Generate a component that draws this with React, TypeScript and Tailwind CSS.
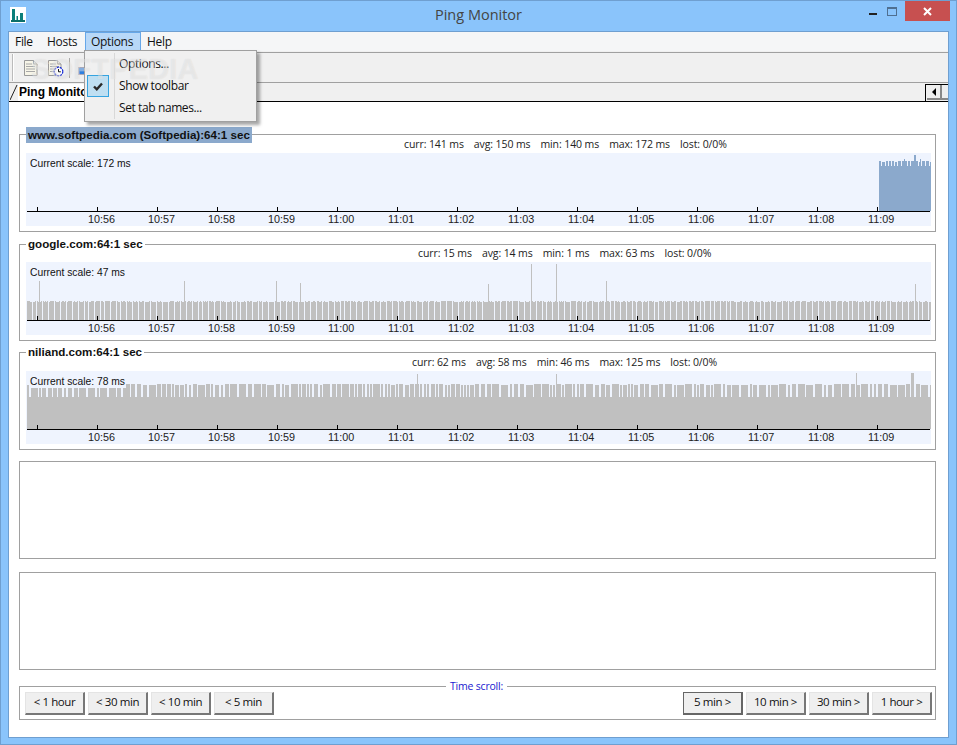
import React from 'react';

const sans = 'font-["Open_Sans","Noto_Sans",sans-serif]';
const arial = 'font-["Liberation_Sans",Arial,sans-serif]';

const times = ['10:56', '10:57', '10:58', '10:59', '11:00', '11:01', '11:02', '11:03', '11:04', '11:05', '11:06', '11:07', '11:08', '11:09'];

// small repeatable pseudo random so the bars stay put
const rnd = (seed: number) => {
  const x = Math.sin(seed * 12.9898) * 43758.5453;
  return x - Math.floor(x);
};

type Spike = { x: number; top: number; w?: number };

const BG = '#eff4fe';
const GRAY = '#c0c0c0';
const BLUE = '#8ba9cc';

const Chart: React.FC<{ kind: 'blue' | 'busy' | 'full'; scale: string; spikes?: Spike[] }> = ({ kind, scale, spikes = [] }) => {
  const axis = 58;
  const bars: React.ReactNode[] = [];

  if (kind === 'blue') {
    bars.push(<rect key="body" x={853} y={13} width={52} height={axis - 13} fill={BLUE} />);
    let x = 853;
    let n = 0;
    while (x < 905) {
      const w = rnd(n) > 0.6 ? 3 : 2;
      bars.push(<rect key={x} x={x} y={rnd(n + 40) > 0.75 ? 9 : 8} width={w} height={6} fill={BLUE} />);
      x += w + 1;
      n += 1;
    }
    bars.push(<rect key="s1" x={888} y={2} width={2} height={11} fill={BLUE} />);
    bars.push(<rect key="s2" x={878} y={6} width={1} height={7} fill={BLUE} />);
    bars.push(<rect key="s3" x={894} y={6} width={1} height={7} fill={BLUE} />);
  }

  if (kind === 'busy') {
    let x = 1;
    let n = 0;
    while (x < 905) {
      const w = rnd(n) > 0.85 ? 3 : 5;
      bars.push(<rect key={x} x={x} y={39} width={w} height={axis - 39} fill={GRAY} />);
      // one pixel notches along the top edge
      for (let c = 0; c < w; c += 1) {
        if (rnd(x + c + 200) > 0.55) bars.push(<rect key={`n${x + c}`} x={x + c} y={39} width={1} height={1} fill={BG} />);
      }
      x += w + 1;
      n += 1;
    }
  }

  if (kind === 'full') {
    bars.push(<rect key="body" x={1} y={26} width={904} height={axis - 26} fill={GRAY} />);
    let x = 1;
    let n = 0;
    while (x < 905) {
      const w = rnd(n) > 0.75 ? 7 : rnd(n) < 0.3 ? 2 : 4;
      const gap = rnd(n + 3) > 0.5 ? 2 : 1;
      const top = rnd(n + 11) > 0.6 ? 14 : 13;
      bars.push(<rect key={x} x={x} y={top} width={w} height={14} fill={GRAY} />);
      x += w + gap;
      n += 1;
    }
  }

  return (
    <div className="relative mx-[6px] h-[73px] w-[905px] bg-[#eff4fe]">
      <svg width="905" height="73" className="block">
        {bars}
        {spikes.map((s, i) => (
          <rect key={i} x={s.x} y={s.top} width={s.w ?? 1} height={axis - s.top} fill={GRAY} />
        ))}
        <rect x={1} y={axis} width={903} height={1} fill="#000" />
        <rect x={11} y={axis - 4} width={1} height={4} fill="#000" />
        {times.map((t, i) => (
          <g key={t}>
            <rect x={71 + i * 60} y={axis - 4} width={1} height={4} fill="#000" />
            <text x={62 + i * 60} y={axis + 12} fontSize="10.8" fill="#222" fontFamily="Liberation Sans, Arial, sans-serif">
              {t}
            </text>
          </g>
        ))}
      </svg>
      <span
        className={`absolute left-[4px] top-[4px] pr-[1px] text-[10.3px] leading-[13px] text-[#111] ${kind === 'full' ? 'bg-[#eff4fe]' : ''} ${arial}`}
      >
        Current scale: {scale}
      </span>
    </div>
  );
};

const Host: React.FC<{
  title: string;
  selected?: boolean;
  stats: string[];
  statsPad: string;
  box: string;
  children: React.ReactNode;
}> = ({ title, selected, stats, statsPad, box, children }) => (
  <div className={`relative w-[917px] border border-[#a0a0a0] ${box}`}>
    <span
      className={`absolute left-[6px] top-[-8px] h-[16px] whitespace-nowrap px-[2px] text-[11.6px] font-bold text-[#111] ${
        selected ? 'bg-[#8ba9cc] leading-[15px]' : 'bg-white leading-[13px]'
      } ${arial}`}
    >
      {title}
    </span>
    <div className={`flex items-center gap-[10px] text-[10.5px] tracking-[-0.1px] text-[#222] ${statsPad} ${sans}`}>
      {stats.map((s) => (
        <span key={s}>{s}</span>
      ))}
    </div>
    {children}
  </div>
);

const ScrollButton: React.FC<{ label: string; focus?: boolean }> = ({ label, focus }) => (
  <button
    className={`flex h-[23px] w-[60px] items-center justify-center border border-b-2 border-r-2 bg-[#efefef] pb-[2px] text-[11.5px] tracking-[-0.4px] text-[#111] ${sans} ${
      focus ? 'border-[#666]' : 'border-b-[#777] border-l-[#e4e4e4] border-r-[#777] border-t-[#e4e4e4]'
    }`}
  >
    {label}
  </button>
);

const DocIcon: React.FC<{ clock?: boolean }> = ({ clock }) => (
  <svg width="16" height="18" viewBox="0 0 16 18">
    <path d="M.5 1.5h9l3.5 3.5v11.5H.5z" fill="#f7f5e8" stroke="#9a9a9a" />
    <path d="M9.5 1.5v3.5H13" fill="#e8e8e0" stroke="#9a9a9a" />
    <path d="M2 5h6M2 7.5h9M2 10h9M2 12.5h9" stroke="#a8a8a8" />
    {clock && <circle cx="10.5" cy="12.5" r="4.3" fill="#fff" stroke="#1a2fd8" strokeWidth="1.3" strokeDasharray="2.2 .8" />}
    {clock && <path d="M10.5 10v2.8h2.3" stroke="#111" fill="none" />}
  </svg>
);

export default function App() {
  return (
    <div className="relative flex h-[745px] w-[957px] flex-col overflow-hidden border border-[#6f9fd0] bg-[#8ac4fb]">
      {/* Title bar */}
      <div className="flex h-[30px] shrink-0 items-start">
        <div className="ml-[9px] mt-[6px] flex h-[16px] w-[16px] items-center justify-center bg-white">
          <svg width="14" height="14" viewBox="0 0 14 14">
            <path d="M1 1h3v11H1zM5.5 8h1.5v4H5.500zM9 5h3v7H9z" fill="#0b7f7a" />
            <path d="M0 12h14v2H0z" fill="#0b6f6a" />
          </svg>
        </div>
        <div className={`flex-1 pl-[62px] pt-[4px] text-center text-[14.5px] leading-[20px] text-[#444] ${sans}`}>Ping Monitor</div>
        <div className="mr-[10px] mt-[6px] h-[2px] w-[8px] translate-y-[6px] bg-[#222]" />
        <div className="mr-[8px] mt-[6px] h-[9px] w-[10px] border border-t-2 border-[#4f6f90]" />
        <div className="mr-[6px] flex h-[20px] w-[45px] items-center justify-center bg-[#c75050]">
          <svg width="9" height="9" viewBox="0 0 9 9">
            <path d="M1 1l7 7M8 1l-7 7" stroke="#fff" strokeWidth="2" />
          </svg>
        </div>
      </div>

      {/* Client area */}
      <div className="mx-[7px] flex h-[707px] w-[941px] shrink-0 flex-col border border-[#6f9fd0] bg-white">
        <div className={`flex h-[20px] shrink-0 items-center border-b border-[#f0f0f0] bg-[#f5f6f7] pl-[1px] text-[12px] tracking-[-0.3px] text-[#111] ${sans}`}>
          <span className="w-[32px] pl-[5px]">File</span>
          <span className="w-[43px] pl-[5px]">Hosts</span>
          <span className="flex h-[20px] w-[56px] items-center justify-center border border-[#66a7e8] bg-[#b8d8f8] pr-[2px]">Options</span>
          <span className="px-[6px]">Help</span>
        </div>

        {/* Toolbar */}
        <div className="flex h-[31px] shrink-0 items-center border-y border-[#a0a0a0] bg-[#f0f0f0] pl-[3px]">
          <div className="h-[27px] w-[2px] border-l border-r border-l-[#bbb] border-r-white" />
          <div className="ml-[10px]">
            <DocIcon />
          </div>
          <div className="ml-[8px]">
            <DocIcon clock />
          </div>
          <div className="ml-[5px] h-[20px] w-[1px] bg-[#aaa]" />
          <div className="ml-[8px] mt-[6px] h-[8px] w-[8px] border border-[#aab] bg-[#2f80e0]" />
        </div>

        {/* Tabs */}
        <div className="flex h-[19px] shrink-0 items-end border-b border-black bg-[#f0f0f0]">
          <svg width="8" height="18" viewBox="0 0 8 18" className="ml-[1px] block">
            <path d="M0 17L7 2" stroke="#222" fill="none" />
          </svg>
          <span className={`bg-white pl-[1px] pr-[2px] text-[12px] font-bold leading-[17px] text-black ${arial}`}>Ping Monitor</span>
          <div className="mb-[-1px] ml-auto flex h-[18px] w-[23px] items-start border-l border-t border-black pl-[1px]">
            <div className="flex h-[15px] w-[15px] items-center justify-center border-b-2 border-r-2 border-[#888] bg-[#eee]">
              <div className="h-0 w-0 border-y-[4px] border-r-[4px] border-y-transparent border-r-black" />
            </div>
            <div className="h-[15px] flex-1 border-b-2 border-[#888] bg-[#eee]" />
          </div>
        </div>

        {/* Hosts */}
        <div className="flex flex-1 flex-col pl-[10px] pt-[32px]">
          <Host
            title="www.softpedia.com (Softpedia):64:1 sec"
            selected
            stats={['curr: 141 ms', 'avg: 150 ms', 'min: 140 ms', 'max: 172 ms', 'lost: 0/0%']}
            statsPad="h-[18px] pl-[384px] pt-[1px]"
            box="mb-[12px] h-[98px]"
          >
            <Chart kind="blue" scale="172 ms" />
          </Host>
          <Host
            title="google.com:64:1 sec"
            stats={['curr: 15 ms', 'avg: 14 ms', 'min: 1 ms', 'max: 63 ms', 'lost: 0/0%']}
            statsPad="h-[17px] pl-[398px]"
            box="mb-[11px] h-[97px]"
          >
            <Chart
              kind="busy"
              scale="47 ms"
              spikes={[
                { x: 13, top: 19 },
                { x: 158, top: 19 },
                { x: 250, top: 19 },
                { x: 274, top: 21 },
                { x: 462, top: 22 },
                { x: 505, top: 2 },
                { x: 530, top: 2 },
                { x: 580, top: 19 },
                { x: 889, top: 22 },
              ]}
            />
          </Host>
          <Host
            title="niliand.com:64:1 sec"
            stats={['curr: 62 ms', 'avg: 58 ms', 'min: 46 ms', 'max: 125 ms', 'lost: 0/0%']}
            statsPad="h-[18px] pl-[392px] pt-[1px]"
            box="mb-[11px] h-[98px]"
          >
            <Chart
              kind="full"
              scale="78 ms"
              spikes={[
                { x: 391, top: 3 },
                { x: 530, top: 3 },
                { x: 830, top: 2 },
                { x: 885, top: 2, w: 3 },
              ]}
            />
          </Host>
          <div className="mb-[13px] h-[98px] w-[917px] border border-[#a0a0a0]" />
          <div className="h-[98px] w-[917px] border border-[#a0a0a0]" />

          {/* Time scroll */}
          <div className="relative mt-[16px] flex h-[34px] w-[917px] items-center justify-between border border-[#a0a0a0] pl-[5px] pr-[3px]">
            <span className={`absolute left-[426px] top-[-8px] bg-white px-[4px] text-[10.5px] leading-[14px] tracking-[-0.2px] text-[#1a1ad0] ${sans}`}>Time scroll:</span>
            <div className="flex gap-[3px]">
              <ScrollButton label="< 1 hour" />
              <ScrollButton label="< 30 min" />
              <ScrollButton label="< 10 min" />
              <ScrollButton label="< 5 min" />
            </div>
            <div className="flex gap-[3px]">
              <ScrollButton label="5 min >" focus />
              <ScrollButton label="10 min >" />
              <ScrollButton label="30 min >" />
              <ScrollButton label="1 hour >" />
            </div>
          </div>
        </div>
      </div>

      {/* Options menu */}
      <div className={`absolute left-[83px] top-[49px] h-[72px] w-[173px] border border-[#a0a0a0] bg-[#f0f0f0] py-[2px] text-[12px] tracking-[-0.4px] text-[#111] shadow-[3px_3px_3px_rgba(0,0,0,0.35)] ${sans}`}>
        <div className="absolute bottom-[2px] left-[29px] top-[2px] w-[1px] bg-[#d8d8d8]" />
        <div className="flex h-[22px] items-center pl-[34px]">Options...</div>
        <div className="relative flex h-[22px] items-center pl-[34px]">
          <div className="absolute left-[2px] top-0 flex h-[22px] w-[22px] items-center justify-center border border-[#36a4e0] bg-[#bfdff2]">
            <svg width="10" height="9" viewBox="0 0 10 9">
              <path d="M1 4.500l2.800 2.800L9 1.500" stroke="#2a2a2a" strokeWidth="2.400" fill="none" />
            </svg>
          </div>
          Show toolbar
        </div>
        <div className="flex h-[22px] items-center pl-[34px]">Set tab names...</div>
      </div>

      {/* Watermark */}
      <span className={`pointer-events-none absolute left-[30px] top-[47px] text-[29px] font-bold tracking-[0.2px] text-white/40 [text-shadow:0_0_1px_rgba(120,120,120,0.2)] ${arial}`}>
        SOFTPEDIA
      </span>
    </div>
  );
}
